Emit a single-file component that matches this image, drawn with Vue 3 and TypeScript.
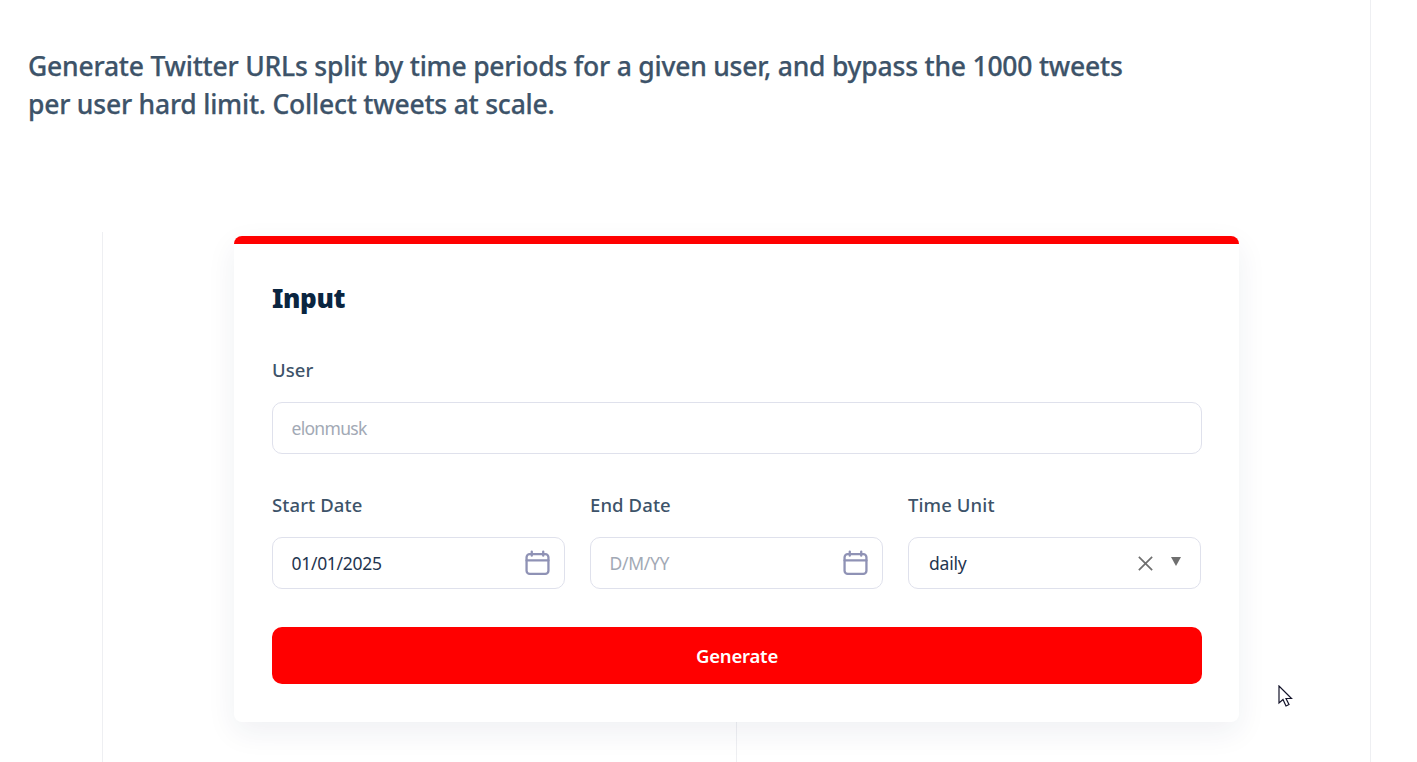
<script setup lang="ts">
import { ref } from 'vue';

// 表单状态
const user = ref('');
const startDate = ref('01/01/2025');
const endDate = ref('');
const timeUnit = ref('daily');
</script>

<template>
  <div class="page">
    <p class="intro">
      Generate Twitter URLs split by time periods for a given user, and bypass the 1000 tweets
      per user hard limit. Collect tweets at scale.
    </p>

    <div class="stage">
      <section class="card">
        <h2 class="card-title">Input</h2>

        <div class="field">
          <label class="field-label">User</label>
          <div class="control">
            <input v-model="user" class="text-input user-input" placeholder="elonmusk" />
          </div>
        </div>

        <div class="row">
          <div class="field">
            <label class="field-label">Start Date</label>
            <div class="control">
              <input v-model="startDate" class="text-input" placeholder="D/M/YY" />
              <svg class="calendar" viewBox="0 0 24 24" fill="none" stroke="#8f92b5" stroke-width="2.2">
                <rect x="1.5" y="3.5" width="21" height="19" rx="3" />
                <path d="M1.5 9.5h21M6.5 1v4M17.5 1v4" stroke-linecap="round" />
              </svg>
            </div>
          </div>

          <div class="field">
            <label class="field-label">End Date</label>
            <div class="control">
              <input v-model="endDate" class="text-input" placeholder="D/M/YY" />
              <svg class="calendar" viewBox="0 0 24 24" fill="none" stroke="#8f92b5" stroke-width="2.2">
                <rect x="1.5" y="3.5" width="21" height="19" rx="3" />
                <path d="M1.5 9.5h21M6.5 1v4M17.5 1v4" stroke-linecap="round" />
              </svg>
            </div>
          </div>

          <div class="field">
            <label class="field-label">Time Unit</label>
            <div class="control select">
              <span class="select-value">{{ timeUnit }}</span>
              <svg class="clear" viewBox="0 0 14 14" fill="none" stroke="#6f6f6f" stroke-width="1.6">
                <path d="M0.8 0.8l12.4 12.4M13.2 0.8L0.8 13.2" />
              </svg>
              <span class="caret"></span>
            </div>
          </div>
        </div>

        <button class="generate" type="button">Generate</button>
      </section>
    </div>

    <!-- 截图里的鼠标指针 -->
    <svg class="pointer" viewBox="0 0 16 24" fill="#fff" stroke="#14142a" stroke-width="1.2">
      <path d="M1 1v17l4-3.5 3 6.5 3-1.500-3-6h5.500z" />
    </svg>
  </div>
</template>

<style scoped>
.page {
  position: relative;
  box-sizing: border-box;
  width: 1371px;
  height: 762px;
  padding-top: 47px;
  border-right: 1px solid #eeeff2;
  overflow: hidden;
  font-family: "Noto Sans", "Open Sans", sans-serif;
}

.intro {
  width: 1110px;
  margin: 0 0 109px 28px;
  color: #3d5369;
  font-size: 26.5px;
  font-weight: 500;
  line-height: 38px;
  letter-spacing: -0.22px;
  -webkit-text-stroke: 0.25px #3d5369;
}

/* 背景的竖线 */
.stage {
  position: relative;
  display: flex;
  justify-content: center;
  width: 1268px;
  height: 530px;
  margin-left: 102px;
  padding-top: 4px;
  box-sizing: border-box;
  border-left: 1px solid #eeeff2;
}

.stage::before {
  content: "";
  position: absolute;
  top: 8px;
  bottom: 0;
  left: 633px;
  width: 1px;
  background: #eeeff2;
}

.card {
  position: relative;
  box-sizing: border-box;
  width: 1005px;
  height: 486px;
  padding: 36px 37px 38px 38px;
  background: #fff;
  border-top: 8px solid #ff0000;
  border-radius: 8px;
  box-shadow: 0 10px 30px rgba(25, 40, 80, 0.07);
}

.card-title {
  margin: 0 0 41px;
  color: #0a2540;
  font-size: 26px;
  font-weight: 900;
  line-height: 36px;
  letter-spacing: -0.4px;
}

.field {
  display: flex;
  flex-direction: column;
}

.field-label {
  margin-bottom: 19px;
  color: #3d5369;
  font-size: 18.5px;
  font-weight: 500;
  line-height: 26px;
  letter-spacing: 0.1px;
}

.control {
  position: relative;
  display: flex;
  align-items: center;
  box-sizing: border-box;
  height: 52px;
  border: 1px solid #dfe1ec;
  border-radius: 10px;
  background: #fff;
}

.text-input {
  flex: 1;
  min-width: 0;
  height: 100%;
  padding: 0 18.5px;
  border: none;
  outline: none;
  background: transparent;
  color: #1f3550;
  font-family: inherit;
  font-size: 17.5px;
  letter-spacing: -0.3px;
}

.text-input::placeholder {
  color: #a2a9b5;
  opacity: 1;
}

.user-input::placeholder {
  letter-spacing: -0.7px;
}

.row {
  display: grid;
  grid-template-columns: repeat(3, 293px);
  gap: 25px;
  margin-top: 38px;
}

.calendar {
  position: absolute;
  top: 12px;
  right: 14px;
  width: 25px;
  height: 26px;
}

.select {
  padding: 0 19px 0 20px;
}

.select-value {
  flex: 1;
  color: #1f3550;
  font-size: 17.500px;
  letter-spacing: -0.2px;
}

.clear {
  width: 15px;
  height: 15px;
  margin-right: 18px;
}

.caret {
  width: 0;
  height: 0;
  margin-top: -4px;
  border-left: 5.500px solid transparent;
  border-right: 5.500px solid transparent;
  border-top: 9px solid #6f6f6f;
}

.generate {
  display: block;
  width: 100%;
  height: 57px;
  margin-top: 38px;
  border: none;
  border-radius: 10px;
  background: #ff0000;
  color: #fff;
  font-family: inherit;
  font-size: 18.5px;
  font-weight: 650;
  letter-spacing: -0.2px;
}

.pointer {
  position: absolute;
  top: 685px;
  left: 1278px;
  width: 16px;
  height: 24px;
}
</style>
